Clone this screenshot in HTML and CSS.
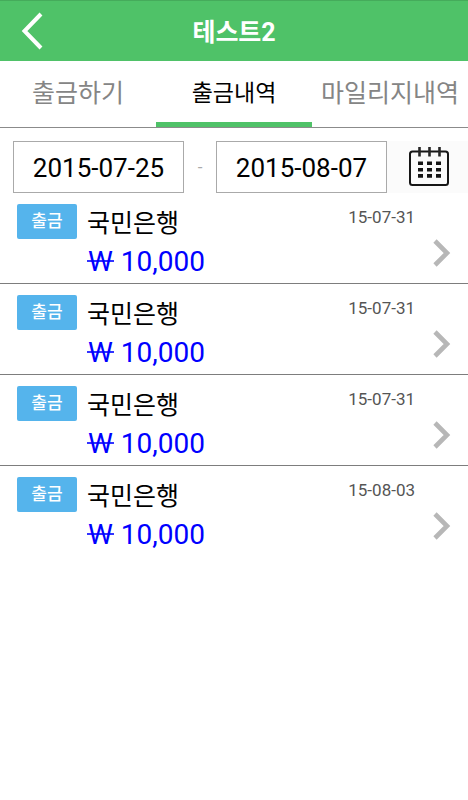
FILE: index.html
```html
<!DOCTYPE html>
<html lang="ko">
<head>
  <meta charset="UTF-8">
  <meta name="viewport" content="width=device-width, initial-scale=1.0">
  <title>테스트2</title>
  <link rel="stylesheet" href="styles.css">
</head>
<body>
  <header class="header">
    <a class="back">
      <svg width="24" height="40" viewBox="0 0 24 40"><path d="M21 3L4.5 20L21 37" fill="none" stroke="#fff" stroke-width="4"/></svg>
    </a>
    <h1 class="title">테스트2</h1>
  </header>

  <nav class="tabs">
    <a class="tab"><span>출금하기</span></a>
    <a class="tab active"><span>출금내역</span></a>
    <a class="tab"><span>마일리지내역</span></a>
  </nav>

  <div class="search">
    <div class="date">2015-07-25</div>
    <span class="dash">-</span>
    <div class="date">2015-08-07</div>
    <a class="calendar">
      <svg width="42" height="42" viewBox="0 0 42 42">
        <rect x="2" y="5.5" width="38" height="33.5" rx="2.5" fill="none" stroke="#161616" stroke-width="2"/>
        <path d="M11.5 1v9.5M21.5 1v9.5M31.5 1v9.5" stroke="#262626" stroke-width="2.6"/>
        <path d="M10 17.2h23.5M10 23.7h23.5M10 29.9h23.5" stroke="#161616" stroke-width="3.6" stroke-dasharray="5 4"/>
      </svg>
    </a>
  </div>

  <ul class="list">
    <li class="item">
      <span class="badge">출금</span>
      <div class="info">
        <p class="bank">국민은행</p>
        <p class="price"><span class="won">W</span> 10,000</p>
      </div>
      <span class="day">15-07-31</span>
      <svg class="arrow" width="20" height="30" viewBox="0 0 20 30"><path d="M3 3L15 15L3 27" fill="none" stroke="#b7b7b7" stroke-width="4.6"/></svg>
    </li>
    <li class="item">
      <span class="badge">출금</span>
      <div class="info">
        <p class="bank">국민은행</p>
        <p class="price"><span class="won">W</span> 10,000</p>
      </div>
      <span class="day">15-07-31</span>
      <svg class="arrow" width="20" height="30" viewBox="0 0 20 30"><path d="M3 3L15 15L3 27" fill="none" stroke="#b7b7b7" stroke-width="4.6"/></svg>
    </li>
    <li class="item">
      <span class="badge">출금</span>
      <div class="info">
        <p class="bank">국민은행</p>
        <p class="price"><span class="won">W</span> 10,000</p>
      </div>
      <span class="day">15-07-31</span>
      <svg class="arrow" width="20" height="30" viewBox="0 0 20 30"><path d="M3 3L15 15L3 27" fill="none" stroke="#b7b7b7" stroke-width="4.6"/></svg>
    </li>
    <li class="item">
      <span class="badge">출금</span>
      <div class="info">
        <p class="bank">국민은행</p>
        <p class="price"><span class="won">W</span> 10,000</p>
      </div>
      <span class="day">15-08-03</span>
      <svg class="arrow" width="20" height="30" viewBox="0 0 20 30"><path d="M3 3L15 15L3 27" fill="none" stroke="#b7b7b7" stroke-width="4.6"/></svg>
    </li>
  </ul>
</body>
</html>
```
FILE: styles.css
```css
* {
  box-sizing: border-box;
}
body {
  margin: 0;
  background: #fff;
  color: #000;
  font-family: Roboto, "Noto Sans CJK KR", sans-serif;
}
.header {
  display: grid;
  grid-template-columns: 60px 1fr 60px;
  align-items: center;
  height: 61px;
  background: #4fc268;
  border-top: 1px solid #45ab5b;
}
.back {
  display: flex;
  padding-left: 20px;
}
.title {
  margin: 0;
  padding-top: 3px;
  color: #fff;
  font-size: 25px;
  line-height: 36px;
  font-weight: bold;
  text-align: center;
  letter-spacing: -0.1px;
}
.tabs {
  display: flex;
  height: 67px;
  border-bottom: 1px solid #8b8b8b;
}
.tab {
  width: 156px;
  border-bottom: 5px solid transparent;
  color: #858585;
  font-size: 25px;
  line-height: 65px;
  text-align: center;
  white-space: nowrap;
}
.tab.active {
  border-color: #4fc268;
  color: #000;
  font-size: 23px;
}
.search {
  display: flex;
  align-items: center;
  height: 73px;
  padding: 5px 0 0 13px;
}
.date {
  width: 171px;
  height: 52px;
  border: 1px solid #aaa;
  font-size: 26px;
  line-height: 53px;
  text-align: center;
}
.dash {
  width: 32px;
  color: #aaa;
  font-size: 17px;
  text-align: center;
}
.calendar {
  display: flex;
  flex: 1;
  height: 52px;
  padding: 5px 0 0 21px;
  background: #fbfbfb;
}
.list {
  margin: 0;
  padding: 0;
  list-style: none;
}
.item {
  display: grid;
  grid-template-columns: 60px 1fr auto 34px;
  height: 91px;
  padding: 11px 19px 0 17px;
  border-bottom: 1px solid #7d7d7d;
}
.item:first-child {
  height: 83px;
  padding-top: 3px;
}
.item:last-child {
  border-bottom: 0;
}
.badge {
  height: 35px;
  border-radius: 2px;
  background: #55b4ec;
  color: #fff;
  font-size: 17px;
  line-height: 35px;
  font-weight: 500;
  text-align: center;
}
.info {
  padding-left: 10px;
}
.bank,
.price {
  margin: 0;
  white-space: nowrap;
}
.bank {
  font-size: 25px;
  line-height: 40px;
}
.price {
  padding-left: 1px;
  color: #00f;
  font-size: 28px;
  line-height: 35px;
}
/* single stroke won sign */
.won {
  position: relative;
  display: inline-block;
  margin-right: 1px;
}
.won::after {
  content: "";
  position: absolute;
  top: 16px;
  left: -1px;
  right: -1px;
  height: 2px;
  background: #00f;
  opacity: 0.8;
}
.day {
  color: #555;
  font-size: 17px;
  line-height: 26px;
}
.arrow {
  margin: 34px 0 0 17px;
}
```
